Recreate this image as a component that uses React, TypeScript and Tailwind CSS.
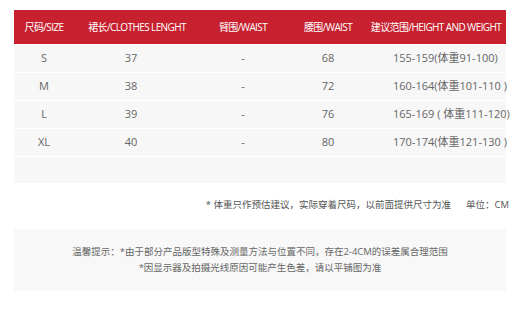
import React from "react";

const rows = [
  { size: "S", len: "37", arm: "-", waist: "68", hw: "155-159(体重91-100)" },
  { size: "M", len: "38", arm: "-", waist: "72", hw: "160-164(体重101-110 )" },
  { size: "L", len: "39", arm: "-", waist: "76", hw: "165-169 ( 体重111-120)" },
  { size: "XL", len: "40", arm: "-", waist: "80", hw: "170-174(体重121-130 )" },
];

const cols = "grid grid-cols-[60px_122px_94px_76px_140px]";
const font = { fontFamily: '"Open Sans", "Noto Sans CJK SC", sans-serif' };

export default function App() {
  return (
    <div className="w-[520px] h-[325px] bg-white pt-[10px]" style={font}>
      {/* Table */}
      <div className="mx-[14px] w-[492px]">
        <div className={`${cols} h-[34px] items-center bg-[#c7212f] text-white text-[10px] tracking-[-0.6px]`}>
          <div className="text-center">尺码/SIZE</div>
          <div className="text-center pl-1">裙长/CLOTHES LENGHT</div>
          <div className="text-center">臂围/WAIST</div>
          <div className="text-center">腰围/WAIST</div>
          <div className="text-center">建议范围/HEIGHT AND WEIGHT</div>
        </div>
        {rows.map((r) => (
          <div
            key={r.size}
            className={`${cols} h-[27px] mt-px items-center bg-[#f7f7f7] text-[11px] text-[#666]`}
          >
            <div className="text-center">{r.size}</div>
            <div className="text-center pr-2">{r.len}</div>
            <div className="text-center">{r.arm}</div>
            <div className="text-center">{r.waist}</div>
            <div className="pl-[27px] whitespace-nowrap">{r.hw}</div>
          </div>
        ))}
        <div className="h-[26px] mt-px bg-[#f7f7f7]" />
      </div>

      {/* Note */}
      <div className="flex justify-end items-center gap-[15px] pr-[11px] mt-[15px] text-[9.5px] text-[#555]">
        <span>* 体重只作预估建议，实际穿着尺码，以前面提供尺寸为准</span>
        <span>单位：CM</span>
      </div>

      {/* Tips */}
      <div className="mx-[14px] mt-[17px] h-[62px] bg-[#f8f8f8] flex flex-col items-center justify-center text-[9.5px] text-[#666] leading-[16px]">
        <div>温馨提示：*由于部分产品版型特殊及测量方法与位置不同，存在2-4CM的误差属合理范围</div>
        <div>*因显示器及拍摄光线原因可能产生色差，请以平铺图为准</div>
      </div>
    </div>
  );
}
